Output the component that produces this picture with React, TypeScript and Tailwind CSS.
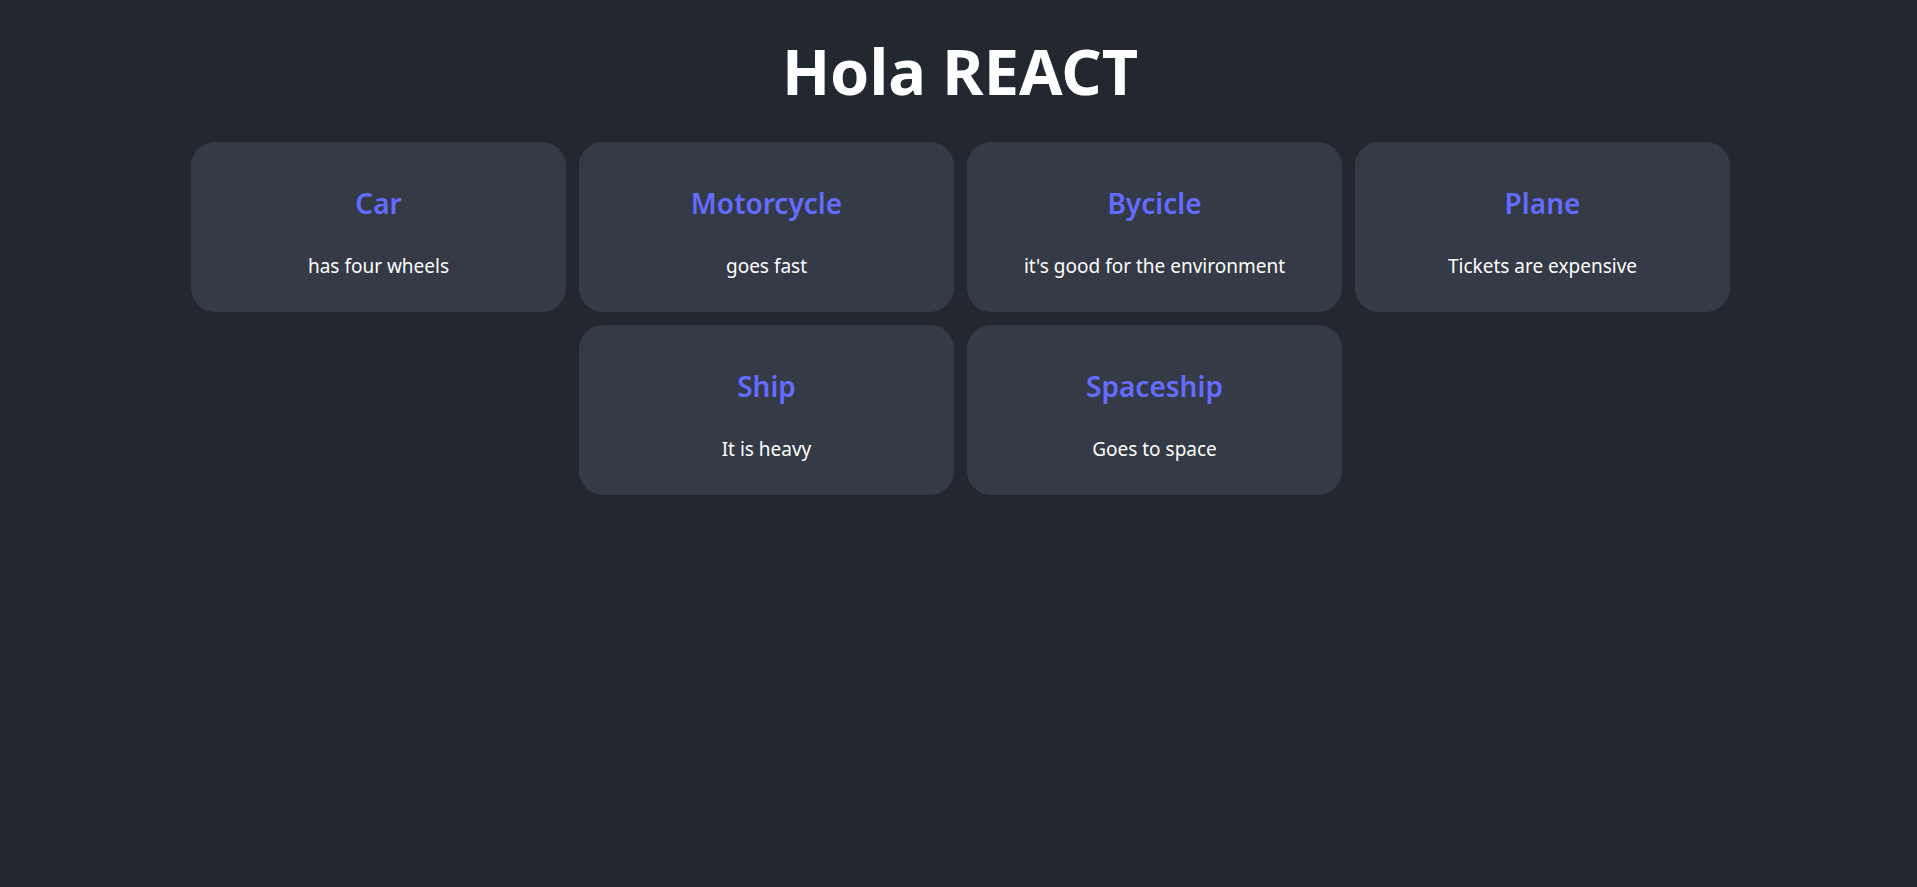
import React from "react";

const items = [
  { title: "Car", desc: "has four wheels" },
  { title: "Motorcycle", desc: "goes fast" },
  { title: "Bycicle", desc: "it's good for the environment" },
  { title: "Plane", desc: "Tickets are expensive" },
  { title: "Ship", desc: "It is heavy" },
  { title: "Spaceship", desc: "Goes to space" },
];

function Card({ title, desc }: { title: string; desc: string }) {
  return (
    <div className="w-[375px] h-[170px] rounded-3xl bg-[#343a46] flex flex-col items-center pt-[44px]">
      <h2 className="text-[28px] leading-[34px] font-semibold text-[#646cff]">{title}</h2>
      <p className="mt-[32px] text-[19px] leading-[28px] text-white">{desc}</p>
    </div>
  );
}

export default function App() {
  return (
    <div className="min-h-screen bg-[#23272f] font-['Noto_Sans',sans-serif] text-white pt-[33px]">
      <h1 className="text-center text-[63px] font-bold leading-[76px] pl-[3px]">Hola REACT</h1>
      <div className="mt-[33px] flex justify-center pl-[4px]">
        <div className="w-[1539px] flex flex-wrap justify-center gap-[13px]">
          {items.map((it) => (
            <Card key={it.title} {...it} />
          ))}
        </div>
      </div>
    </div>
  );
}
